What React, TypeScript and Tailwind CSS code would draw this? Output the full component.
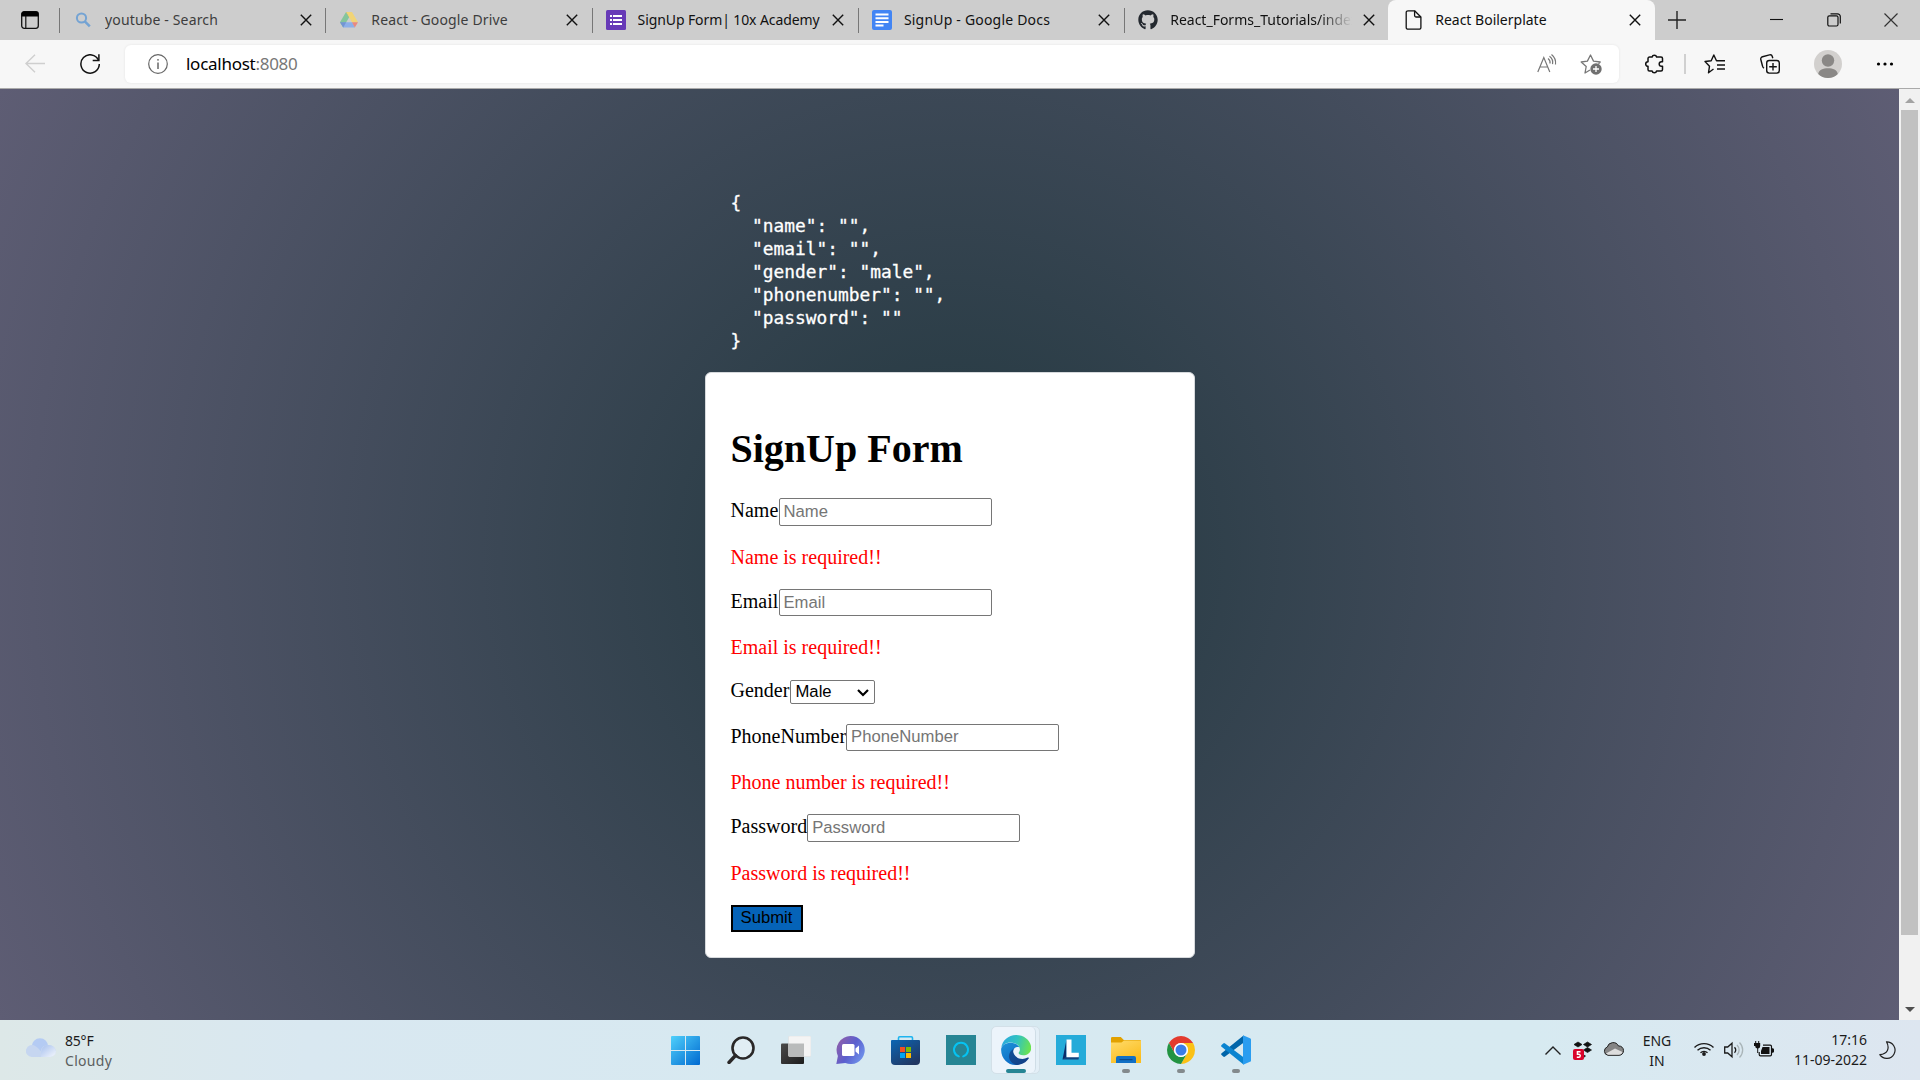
import React from "react";
import { FaGithub } from "react-icons/fa";

type IconProps = { className?: string };

const CloseX = ({ className = "" }: IconProps) => (
  <svg viewBox="0 0 12 12" className={`h-3 w-3 shrink-0 ${className}`} fill="none" stroke="#111" strokeWidth="1.4">
    <path d="M.8.8l10.4 10.4M11.2.8L.8 11.2" />
  </svg>
);

const BingSearch = () => (
  <svg viewBox="0 0 20 20" className="h-5 w-5" fill="none" stroke="#74a3d3">
    <circle cx="8.500" cy="8" r="4.600" strokeWidth="2" />
    <path d="M11.800 11.300l5 5" strokeWidth="2.600" />
  </svg>
);

const Drive = () => (
  <svg viewBox="0 0 20 20" className="h-5 w-5">
    <path d="M7 2l3 5.400L4.200 17.400 1 12.200z" fill="#84c59c" />
    <path d="M7 2h6l-3 5.400z" fill="#69a67c" />
    <path d="M13 2l6 10.200h-6L7 2z" fill="#f1d477" />
    <path d="M4.400 12.200h8.800l2.800 5.200H4z" fill="#8cafe9" />
    <path d="M4.200 17.400L1 12.200h6.200z" fill="#7395d3" />
    <path d="M13 12.200h6l-3.200 5.200z" fill="#e98980" />
  </svg>
);

const Forms = () => (
  <svg viewBox="0 0 20 20" className="h-5 w-5">
    <rect width="20" height="20" rx="1.500" fill="#673ab7" />
    <path d="M4 5h2v2H4zM4 9h2v2H4zM4 13h2v2H4zM7 5h9v2H7zM7 9h9v2H7zM7 13h9v2H7z" fill="#fff" />
  </svg>
);

const Docs = () => (
  <svg viewBox="0 0 20 20" className="h-5 w-5">
    <rect width="20" height="20" rx="2" fill="#4285f4" />
    <path d="M3.500 3.500h13v2h-13zM3.500 7.200h13v2h-13zM3.500 10.900h13v2h-13zM3.500 14.400h8v2h-8z" fill="#fff" />
  </svg>
);

const Page = () => (
  <svg viewBox="0 0 18 20" className="ml-px h-5 w-[18px]" fill="none" stroke="#111" strokeWidth="1.300" strokeLinejoin="round">
    <path d="M3 .8h6.600L15.900 7v10.400a1.800 1.800 0 0 1-1.800 1.800H3a1.800 1.800 0 0 1-1.800-1.800V2.600A1.800 1.800 0 0 1 3 .8z" />
    <path d="M9.600.8v4.600A1.600 1.600 0 0 0 11.200 7h4.700" />
  </svg>
);

type TabProps = { icon: React.ReactNode; title: string; titleClass?: string };

const Tab = ({ icon, title, titleClass = "" }: TabProps) => (
  <div className="flex h-10 w-[266.3px] shrink-0 items-center pl-[13px]">
    <div className="flex w-5 shrink-0 justify-center">{icon}</div>
    <div className={`ml-3 mt-[-1px] w-[184px] overflow-hidden whitespace-nowrap text-sm ${titleClass}`}>{title}</div>
    <CloseX className="ml-[10.500px]" />
    <div className="ml-auto h-[25px] w-px bg-[#777]" />
  </div>
);

const TabBar = () => (
  <div className="flex h-10 bg-[#cdcdcd] text-[#111]">
    <div className="flex h-10 w-[60px] items-center justify-between pl-[21px]">
      <svg viewBox="0 0 18 18" className="h-[18px] w-[18px]">
        <rect x=".7" y=".7" width="16.600" height="16.600" rx="2.500" fill="none" stroke="#111" strokeWidth="1.300" />
        <path d="M.5 5.500V3A2.500 2.500 0 0 1 3 .5h12A2.500 2.500 0 0 1 17.500 3v2.500z" />
        <path d="M4.800 5v12" stroke="#111" strokeWidth="1.200" />
      </svg>
      <div className="h-[25px] w-px bg-[#777]" />
    </div>
    <Tab icon={<BingSearch />} title="youtube - Search" titleClass="text-[#3d3d3d] tracking-[0.15px]" />
    <Tab icon={<Drive />} title="React - Google Drive" titleClass="text-[#3d3d3d] tracking-[0.15px]" />
    <Tab icon={<Forms />} title="SignUp Form| 10x Academy" titleClass="tracking-[-0.1px]" />
    <Tab icon={<Docs />} title="SignUp - Google Docs" titleClass="tracking-[0.2px]" />
    <div className="flex h-10 w-[263px] shrink-0 items-center pl-[13px]">
      <FaGithub className="h-5 w-5 shrink-0 text-[#24292f]" />
      <div className="ml-3 mt-[-1px] w-[182px] overflow-hidden whitespace-nowrap text-sm tracking-[0px] [mask-image:linear-gradient(90deg,#000_82%,transparent)]">
        React_Forms_Tutorials/index.js
      </div>
      <CloseX className="ml-[11px]" />
    </div>
    <div className="flex h-10 w-[267px] shrink-0 items-center rounded-t-lg bg-[#f7f7f7] pl-4">
      <Page />
      <div className="ml-3 mt-[-1px] w-[194px] whitespace-nowrap text-sm tracking-[0px]">React Boilerplate</div>
      <CloseX />
    </div>
    <svg viewBox="0 0 18 18" className="ml-[13px] mt-[11px] h-[18px] w-[18px]" stroke="#222" strokeWidth="1.400">
      <path d="M9 0v18M0 9h18" />
    </svg>
    <svg viewBox="0 0 14 14" className="ml-[84px] mt-[13px] h-3.5 w-3.5" stroke="#111" strokeWidth="1.100">
      <path d="M0 6.500h13" />
    </svg>
    <svg viewBox="0 0 14 14" className="ml-[43px] mt-[13px] h-3.5 w-3.5" fill="none" stroke="#111" strokeWidth="1.200">
      <rect x=".8" y="2.800" width="10.200" height="10.200" rx="1.500" />
      <path d="M3.500.8h7A2.800 2.800 0 0 1 13.300 3.600v7" />
    </svg>
    <svg viewBox="0 0 14 14" className="ml-[43px] mt-[13px] h-3.5 w-3.5" stroke="#333" strokeWidth="1.200">
      <path d="M.5.500l13 13M13.500.5l-13 13" />
    </svg>
  </div>
);

const Toolbar = () => (
  <div className="flex h-[49px] items-center border-b border-[#aaa] bg-[#f7f7f7]">
    <svg viewBox="0 0 20 20" className="ml-[25px] h-5 w-5" fill="none" stroke="#cfcfcf" strokeWidth="1.400">
      <path d="M20 9.500H1M10 .8L1 9.500l9 8.700" />
    </svg>
    <svg viewBox="0 0 20 20" className="ml-[35px] h-5 w-5" fill="none" stroke="#111" strokeWidth="1.500">
      <path d="M18.500 6.200A9.200 9.200 0 1 0 19.300 10" />
      <path d="M18.900.3v6.100h-6.200" />
    </svg>
    <div className="ml-[25px] mt-[-1px] flex h-[38px] w-[1494px] items-center rounded-md bg-white shadow-[0_0_3px_rgba(0,0,0,0.080)]">
      <svg viewBox="0 0 20 20" className="ml-[22.500px] h-5 w-5" fill="none" stroke="#666" strokeWidth="1.200">
        <circle cx="10" cy="10" r="9.300" />
        <path d="M10 8.500V15" strokeWidth="1.500" />
        <circle cx="10" cy="5.800" r=".9" fill="#666" stroke="none" />
      </svg>
      <div className="ml-[18.500px] text-[17px] tracking-[-0.27px] text-black">
        localhost<span className="text-[#777]">:8080</span>
      </div>
      <svg viewBox="0 0 20 20" className="ml-auto mr-[23px] h-5 w-5" fill="none" stroke="#777" strokeWidth="1.200">
        <path d="M.8 18L6.800 3.500 12.800 18M3 13h7.600" />
        <path d="M11 4.500a5 5 0 0 1 2 5M12.500 2.200a8 8 0 0 1 3 8M14.500.5a11 11 0 0 1 4 10" />
      </svg>
      <svg viewBox="0 0 22 22" className="mr-[17px] h-[22px] w-[22px]" fill="none" stroke="#777" strokeWidth="1.300" strokeLinejoin="round">
        <path d="M10 17l-5 3 1.200-6.500L1.200 9l6.200-.9L10.500 2l3 6.100 6.700.9-1.700 1.700" />
        <circle cx="16" cy="16" r="5.700" fill="#707070" stroke="none" />
        <path d="M16 13v6M13 16h6" stroke="#fff" />
      </svg>
    </div>
    <svg viewBox="0 0 20 20" className="ml-[25px] h-5 w-5" fill="none" stroke="#111" strokeWidth="1.500" strokeLinejoin="round">
      <path d="M5.500 3h2.600a2.300 2.300 0 0 1 4.500 0h4.400A1.500 1.500 0 0 1 18.500 4.500V7.700h-1a2.300 2.300 0 0 0 0 4.600h1V15.500A1.500 1.500 0 0 1 17 17h-4.400a2.300 2.300 0 0 1-4.500 0H5.500A1.500 1.500 0 0 1 4 15.500v-3.200a2.300 2.300 0 0 1 0-4.600V4.500A1.500 1.500 0 0 1 5.500 3z" />
    </svg>
    <div className="ml-5 h-5 w-0.5 bg-[#d0d0d0]" />
    <svg viewBox="0 0 22 20" className="ml-[18px] h-5 w-[22px]" fill="none" stroke="#111" strokeWidth="1.400" strokeLinejoin="round">
      <path d="M9.500 15L4.500 18.800l1-6.600L1 7.500l6.200-.7L9.800 1l2.700 5.800H21" />
      <path d="M13 11h8M13 15h8" />
    </svg>
    <svg viewBox="0 0 20 20" className="ml-[34px] h-5 w-5" fill="none" stroke="#111" strokeWidth="1.400">
      <rect x="6.700" y="6.500" width="12.600" height="12.600" rx="2.500" />
      <path d="M13 9v7.600M9.200 12.800h7.600M4 14.200A3 3 0 0 1 2.500 12L.8 5.500A2.300 2.300 0 0 1 2.500 2.700L9.500.9A2.300 2.300 0 0 1 12.300 2.500l.5 1.700" />
    </svg>
    <svg viewBox="0 0 28 28" className="ml-[34px] h-7 w-7">
      <circle cx="14" cy="14" r="14" fill="#d2d0ce" />
      <circle cx="14" cy="10.500" r="6.200" fill="#8a8886" />
      <path d="M4.200 24C5 19.500 9 18.200 14 18.200s9 1.300 9.800 5.800a14 14 0 0 1-19.600 0z" fill="#8a8886" />
    </svg>
    <svg viewBox="0 0 18 4" className="ml-[34px] h-1 w-[18px]">
      <circle cx="2.500" cy="2" r="1.600" />
      <circle cx="9" cy="2" r="1.600" />
      <circle cx="15.500" cy="2" r="1.600" />
    </svg>
  </div>
);

type FieldProps = { label: string; error: string; row: string; input: string; err: string; labelClass: string };

const Field = ({ label, error, row, input, err, labelClass }: FieldProps) => (
  <>
    <div className={`flex items-start ${row}`}>
      <label className={labelClass}>{label}</label>
      <input
        placeholder={label}
        className={`w-[213px] rounded-[2px] border border-[#767676] bg-white px-1 font-['Liberation_Sans',Arial,sans-serif] text-[16.667px] leading-none placeholder:text-[#757575] ${input}`}
      />
    </div>
    <p className={`text-[#ff0000] ${err}`}>{error}</p>
  </>
);

const values = { name: "", email: "", gender: "male", phonenumber: "", password: "" };

const SignUp = () => (
  <div className="mx-auto flex w-[490px] flex-col pt-[102px]">
    <pre className="ml-[26px] h-[161px] font-['DejaVu_Sans_Mono',monospace] text-[17.850px] leading-[23px] text-white [-webkit-text-stroke:0.300px_white]">
      {JSON.stringify(values, null, 2)}
    </pre>
    <form className="mt-5 h-[586px] rounded-[6px] border border-[#d6d9dc] bg-white pl-[25px] font-['Liberation_Serif','Times_New_Roman',serif] text-xl leading-[23px] text-black">
      <h1 className="mt-[53px] text-[40px] font-bold leading-[46px]">SignUp Form</h1>
      <Field label="Name" error="Name is required!!" row="mt-[26px] h-7" input="h-7" err="mt-5" labelClass="mt-px w-12" />
      <Field label="Email" error="Email is required!!" row="mt-5 h-[27px]" input="h-[27px]" err="mt-5" labelClass="mt-px w-12" />
      <div className="mt-[21px] flex h-6 items-start">
        <label className="mt-[-1px] w-[59px]">Gender</label>
        <button type="button" className="flex h-6 w-[85px] items-center justify-between rounded-[2px] border border-[#767676] bg-white pl-[5px] pr-[5px] font-['Liberation_Sans',Arial,sans-serif] text-[16.667px] leading-none">
          Male
          <svg viewBox="0 0 12 8" className="mt-px h-2 w-3" fill="none" stroke="#000" strokeWidth="2.200">
            <path d="M1 1l5 5 5-5" />
          </svg>
        </button>
      </div>
      <Field label="PhoneNumber" error="Phone number is required!!" row="mt-5 h-[27px]" input="h-[27px] pb-0.5" err="mt-5" labelClass="mt-px" />
      <Field label="Password" error="Password is required!!" row="mt-5 h-7" input="h-7" err="mt-5" labelClass="mt-px" />
      <button type="button" className="mt-5 flex h-[27px] w-[72px] items-center justify-center border-2 border-black bg-[#0563b8] font-['Liberation_Sans',Arial,sans-serif] text-[16.667px] leading-none">
        Submit
      </button>
    </form>
  </div>
);

const ScrollBar = () => (
  <div className="flex w-[21px] flex-col items-center bg-[#f1f1f1]">
    <div className="mt-[9px] h-0 w-0 border-x-[5px] border-b-[5px] border-x-transparent border-b-[#a3a3a3]" />
    <div className="mt-[7px] h-[825px] w-[17px] bg-[#c1c1c1]" />
    <div className="mt-[72px] h-0 w-0 border-x-[5px] border-t-[5px] border-x-transparent border-t-[#505050]" />
  </div>
);

const WindowsLogo = () => (
  <svg viewBox="0 0 29 29" className="h-[29px] w-[29px]">
    <defs>
      <linearGradient id="win" x1="0" y1="0" x2="29" y2="29" gradientUnits="userSpaceOnUse">
        <stop stopColor="#4fd0fb" />
        <stop offset="1" stopColor="#0069d0" />
      </linearGradient>
    </defs>
    <path d="M1 0h13v14H0V1a1 1 0 0 1 1-1zM15 0h13a1 1 0 0 1 1 1v13H15zM0 15h14v14H1a1 1 0 0 1-1-1zM15 15h14v13a1 1 0 0 1-1 1H15z" fill="url(#win)" />
  </svg>
);

const SearchIcon = () => (
  <svg viewBox="0 0 28 28" className="h-7 w-7" fill="none" stroke="#2a2828">
    <circle cx="16" cy="12" r="10.500" strokeWidth="2.600" fill="#fff" fillOpacity=".25" />
    <path d="M8.500 19.500l-6.500 7" strokeWidth="3.400" strokeLinecap="round" />
  </svg>
);

const TaskView = () => (
  <svg viewBox="0 0 30 28" className="h-7 w-[30px]">
    <defs>
      <linearGradient id="tv" x1="0" y1="0" x2="1" y2="1">
        <stop stopColor="#4a4a4a" />
        <stop offset="1" stopColor="#1d1d1d" />
      </linearGradient>
    </defs>
    <rect y="7.500" width="23" height="20.500" rx="1" fill="url(#tv)" />
    <rect x="7.500" width="22.500" height="20.500" rx="1" fill="#f4f4f4" stroke="#ddd" strokeWidth=".5" />
    <path d="M7.500 7.500H23v13H8.500a1 1 0 0 1-1-1z" fill="#b9bbbb" />
  </svg>
);

const Chat = () => (
  <svg viewBox="0 0 29 28" className="h-7 w-[29px]">
    <defs>
      <linearGradient id="chat" x1="0" y1="0" x2="1" y2=".6">
        <stop offset=".15" stopColor="#8a5fae" />
        <stop offset=".6" stopColor="#5b5fce" />
        <stop offset="1" stopColor="#6d8de8" />
      </linearGradient>
    </defs>
    <path d="M14.800 0a14 14 0 1 1-5.500 26.900L.3 28l1.600-8A14 14 0 0 1 14.800 0z" fill="url(#chat)" />
    <rect x="6" y="8" width="12.500" height="12" rx="1.500" fill="#fff" />
    <path d="M19.500 12.500L23 9.500v9l-3.500-3z" fill="#fff" />
  </svg>
);

const Store = () => (
  <svg viewBox="0 0 29 29" className="h-[29px] w-[29px]">
    <defs>
      <linearGradient id="store" x1="0" y1="0" x2=".7" y2="1">
        <stop stopColor="#0c66b4" />
        <stop offset="1" stopColor="#213762" />
      </linearGradient>
    </defs>
    <path d="M7.500 5V2a1.200 1.200 0 0 1 1.200-1.200h11.600A1.200 1.200 0 0 1 21.500 2v3" fill="none" stroke="#1fb4ef" strokeWidth="1.600" />
    <path d="M0 5a1 1 0 0 1 1-1h27a1 1 0 0 1 1 1v20a4 4 0 0 1-4 4H4a4 4 0 0 1-4-4z" fill="url(#store)" />
    <path d="M9 11h5v5H9z" fill="#f25022" />
    <path d="M15 11h5v5h-5z" fill="#7fba00" />
    <path d="M9 17h5v5H9z" fill="#00a4ef" />
    <path d="M15 17h5v5h-5z" fill="#ffb900" />
  </svg>
);

const Alexa = () => (
  <svg viewBox="0 0 30 30" className="h-[30px] w-[30px]">
    <path d="M0 0h30v30H0z" fill="#268594" />
    <path d="M12.800 21.400A7 7 0 1 1 17.200 21.400" fill="none" stroke="#05c3f2" strokeWidth="2" strokeLinecap="round" />
  </svg>
);

const Edge = () => (
  <svg viewBox="0 0 30 30" className="h-[30px] w-[30px]">
    <defs>
      <linearGradient id="e1" x1="0" y1=".3" x2="1" y2=".5">
        <stop stopColor="#2aa8df" />
        <stop offset=".5" stopColor="#31c3c0" />
        <stop offset="1" stopColor="#6be34f" />
      </linearGradient>
      <linearGradient id="e2" x1="0" y1="0" x2=".6" y2="1">
        <stop stopColor="#1e93d8" />
        <stop offset="1" stopColor="#0b68c4" />
      </linearGradient>
      <linearGradient id="e3" x1="0" y1="0" x2="1" y2="1">
        <stop stopColor="#125199" />
        <stop offset="1" stopColor="#123f86" />
      </linearGradient>
    </defs>
    <path d="M.3 13C1 5.500 7.500 0 15 0c8.500 0 15.200 6 15.200 13 0 4.500-3.500 7.300-8 7.300-3.200 0-4.600-1.300-4.600-2.200 0-.7 1.300-1.300 1.300-3.500C18.900 10 14 7.500 9.500 7.500 5 7.500 1.500 10 .3 13z" fill="url(#e1)" />
    <path d="M.2 13.500C1.500 10 5 7.800 9.500 7.800c4 0 7.500 1.800 8.800 4.500-3-1-6 .7-6.300 4-.4 5 4 10.500 11 10.200C20 29 17 30 14.500 30 6.500 30-.6 22.800.2 13.500z" fill="url(#e2)" />
    <path d="M13.200 13.200c-3.700 2.300-5.700 5.600-5.200 9 .5 3.500 3.300 6.700 7.500 7.700 5 .3 9.600-2.300 12.200-6.300.6-1-.2-1.500-1-1-5.700 3-12.200.5-14-4-.8-2-.7-4 .5-5.400z" fill="url(#e3)" />
  </svg>
);

const LensL = () => (
  <svg viewBox="0 0 30 30" className="h-[30px] w-[30px]">
    <path d="M0 0h30v30H0z" fill="#25abd9" />
    <path d="M10.500 4.500L6.500 24.500l4-2z" fill="#0a2d6a" />
    <path d="M6.500 24.500l4-3h12.500l-.5 3z" fill="#10447f" />
    <path d="M10.500 4.500h5v13.300h7.300v4.400H10.500z" fill="#fff" />
  </svg>
);

const Folder = () => (
  <svg viewBox="0 0 30 26" className="h-[26px] w-[30px]">
    <defs>
      <linearGradient id="fold" x1="0" y1="0" x2=".6" y2="1">
        <stop stopColor="#ffdb6b" />
        <stop offset="1" stopColor="#fbbd1e" />
      </linearGradient>
    </defs>
    <path d="M0 1.200A1.200 1.200 0 0 1 1.200 0h8.600l3 3H29a1 1 0 0 1 1 1v8H0z" fill="#e2a100" />
    <path d="M0 5.500h10.500L13 3.500h17V26H0z" fill="url(#fold)" />
    <path d="M5 26v-5a2 2 0 0 1 2-2h16a2 2 0 0 1 2 2v5z" fill="#1170c5" />
    <path d="M8.500 22.600h13" stroke="#0b4a8b" strokeWidth="1.200" />
  </svg>
);

const Chrome = () => (
  <svg viewBox="0 0 28 28" className="h-7 w-7">
    <path d="M1.900 7A14 14 0 0 1 26.100 7H14a7 7 0 0 0-6.060 10.500z" fill="#e33b2e" />
    <path d="M26.100 7A14 14 0 0 1 14 28l6.060-10.500A7 7 0 0 0 14 7z" fill="#fbc116" />
    <path d="M14 28A14 14 0 0 1 1.900 7l6.040 10.500a7 7 0 0 0 12.120 0z" fill="#229342" />
    <circle cx="14" cy="14" r="7" fill="#fff" />
    <circle cx="14" cy="14" r="5.500" fill="#3b7de8" />
  </svg>
);

const VSCode = () => (
  <svg viewBox="0 0 30 30" className="h-[30px] w-[30px]">
    <path d="M22.500.5L.6 18.200a1.200 1.200 0 0 0 0 1.800l1.600 1.500a1.500 1.500 0 0 0 1.900 0L22.500 7.800z" fill="#0065a9" />
    <path d="M22.500 29.500L.6 11.800a1.200 1.200 0 0 1 0-1.800l1.600-1.500a1.500 1.500 0 0 1 1.900 0l18.400 13.700z" fill="#0a84d0" />
    <path d="M22 .3L29 3.200a1.500 1.500 0 0 1 1 1.400v20.800a1.500 1.500 0 0 1-1 1.400l-7 2.900z" fill="#2a9df0" />
  </svg>
);

const apps: { icon: React.ReactNode; running?: boolean; active?: boolean }[] = [
  { icon: <WindowsLogo /> },
  { icon: <SearchIcon /> },
  { icon: <TaskView /> },
  { icon: <Chat /> },
  { icon: <Store /> },
  { icon: <Alexa /> },
  { icon: <Edge />, active: true },
  { icon: <LensL /> },
  { icon: <Folder />, running: true },
  { icon: <Chrome />, running: true },
  { icon: <VSCode />, running: true },
];

const Tray = () => (
  <div className="ml-auto flex items-center pr-[24px] text-[#1b1b1b]">
    <svg viewBox="0 0 16 9" className="h-[9px] w-4" fill="none" stroke="#222" strokeWidth="1.400">
      <path d="M.5 8.500L8 1l7.500 7.500" />
    </svg>
    <svg viewBox="0 0 19 19" className="ml-3 h-[19px] w-[19px]">
      <path d="M1 3.500L5 1l4 2.500L5 6zM10.500 3.500l4-2.500 4 2.500-4 2.500zM10.500 9l4-2.500 4 2.500-4 2.500zM9 13l3.500 2L10 17z" fill="#111" stroke="#111" strokeWidth=".7" />
      <rect y="8" width="11" height="11" rx="2" fill="#d9042b" />
      <path d="M7.500 10.700H4.400v2.500h1.400a1.500 1.500 0 0 1 0 3H3.800" fill="none" stroke="#fff" strokeWidth="1.400" />
    </svg>
    <svg viewBox="0 0 21 14" className="ml-[11px] mt-[-2px] h-3.5 w-[21px]">
      <path d="M5 13.300A4.300 4.300 0 0 1 4.300 5 6 6 0 0 1 15.500 4a4.500 4.500 0 0 1 5 4.500 4.500 4.500 0 0 1-4.500 4.800z" fill="#858585" stroke="#222" />
      <path d="M3 11.500L12 6.500l7.500 3.500a4 4 0 0 1-3.500 2.800H5z" fill="#ddd" />
    </svg>
    <div className="ml-[18px] mt-px w-[30px] text-center text-sm leading-5">
      ENG
      <br />
      IN
    </div>
    <svg viewBox="0 0 20 15" className="ml-[22px] mt-[-3px] h-[15px] w-5" fill="none" stroke="#1b1b1b" strokeWidth="1.400">
      <path d="M.5 6.500a13.500 13.500 0 0 1 19 0M3.500 9.300a9.400 9.400 0 0 1 13 0M6.500 11.800a5.200 5.200 0 0 1 7 0" />
      <circle cx="10" cy="13" r="1.900" fill="#1b1b1b" stroke="none" />
    </svg>
    <svg viewBox="0 0 20 18" className="ml-2.5 h-[18px] w-5" fill="none" stroke="#1b1b1b" strokeWidth="1.300">
      <path d="M.7 6h3L8 2.200v13.600L3.700 12h-3z" />
      <path d="M10.500 6.300a4 4 0 0 1 0 5.400" />
      <path d="M13 4a7 7 0 0 1 0 10M15.500 1.500a10.500 10.500 0 0 1 0 15" stroke="#a9b4b8" />
    </svg>
    <svg viewBox="0 0 20 16" className="ml-2.5 mt-[-3px] h-4 w-5">
      <path d="M9 4.200h7.200a1.300 1.300 0 0 1 1.300 1.300v8a1.300 1.300 0 0 1-1.300 1.300H6.500a1.300 1.300 0 0 1-1.300-1.300V11" fill="none" stroke="#111" strokeWidth="1.200" />
      <path d="M8.500 6h7v7h-8.500v-3zM18 7.200h1.200l.8 1v2.600l-.8 1H18zM1.200 0h1v2h2V0h1v2h1v3a2.400 2.400 0 0 1-2 2.400V12h-1V7.400a2.400 2.400 0 0 1-2-2.400H0V2h1.200z" fill="#111" />
    </svg>
    <div className="w-[93px] text-right text-sm leading-5">
      17:16
      <br />
      <span className="whitespace-nowrap">11-09-2022</span>
    </div>
    <svg viewBox="0 0 17 18" className="ml-3 h-[18px] w-[17px]" fill="none" stroke="#222" strokeWidth="1.200" strokeLinejoin="round">
      <path d="M7.500.8A8.300 8.300 0 1 1 .8 13.700C4.500 13.300 7 12.500 8.400 9.500 9.800 6.500 9 3.500 7.500.8z" />
    </svg>
  </div>
);

const ActiveTile = ({ icon }: { icon: React.ReactNode }) => (
  <div className="flex h-12 w-[49px] rounded-[5px] border border-[#d3e0e8] bg-[#e3eff7]">
    <div className="flex h-[46px] w-11 flex-col items-center rounded-[5px] border-r border-[#cfdde6] bg-[#ecf4fb] pl-1">
      <div className="mt-[7px] flex h-8 items-center">{icon}</div>
      <div className="mt-1 h-1 w-5 shrink-0 rounded-full bg-[#268594]" />
    </div>
  </div>
);

const Taskbar = () => (
  <div className="flex h-[60px] bg-[linear-gradient(90deg,#dde8e8_0%,#d9e8f1_16%,#d7e9f1_40%,#d7eaf1_80%,#dde6f0_100%)]">
    <div className="flex w-[658px] items-center pl-[26px]">
      <svg viewBox="0 0 30 20" className="mt-[-4px] h-5 w-[30px]">
        <defs>
          <linearGradient id="cl" x1="0" y1="0" x2="1" y2="1">
            <stop stopColor="#a6c0ee" />
            <stop offset="1" stopColor="#f4f7fc" />
          </linearGradient>
        </defs>
        <circle cx="14" cy="8.500" r="8.300" fill="#b4cbf3" />
        <path d="M6 19A6 6 0 1 1 9.500 8.200c2 1 4 3 5 5A8 8 0 0 1 30 13a6.500 6.500 0 0 1-6.500 6z" fill="#c6d6f0" />
        <path d="M15 19a13 13 0 0 1 1-8 7.500 7.500 0 0 1 14 2.500A6 6 0 0 1 23.500 19z" fill="url(#cl)" />
      </svg>
      <div className="ml-[9px] mt-0.5 text-sm leading-5">
        <div className="tracking-[-0.2px] text-[#1b1b1b]">85°F</div>
        <div className="tracking-[0.3px] text-[#5b5f60]">Cloudy</div>
      </div>
    </div>
    <div className="flex">
      {apps.map((a, i) => (
        <div key={i} className="flex w-[55px] flex-col items-center pt-1.5">
          {a.active ? (
            <ActiveTile icon={a.icon} />
          ) : (
            <div className="flex h-12 w-12 flex-col items-center border border-transparent">
              <div className="mt-[7px] flex h-8 items-center">{a.icon}</div>
              {a.running && <div className="mt-1 h-1 w-2 shrink-0 rounded-full bg-[#838a8d]" />}
            </div>
          )}
        </div>
      ))}
    </div>
    <Tray />
  </div>
);

export default function App() {
  return (
    <div className="flex h-[1080px] w-[1920px] flex-col overflow-hidden font-['Noto_Sans','Open_Sans',sans-serif]">
      <TabBar />
      <Toolbar />
      <div className="flex h-[931px]">
        <main className="w-[1899px] bg-[radial-gradient(circle_1058px_at_950px_466px,#21373e_0%,#5e5d74_100%)]">
          <SignUp />
        </main>
        <ScrollBar />
      </div>
      <Taskbar />
    </div>
  );
}
